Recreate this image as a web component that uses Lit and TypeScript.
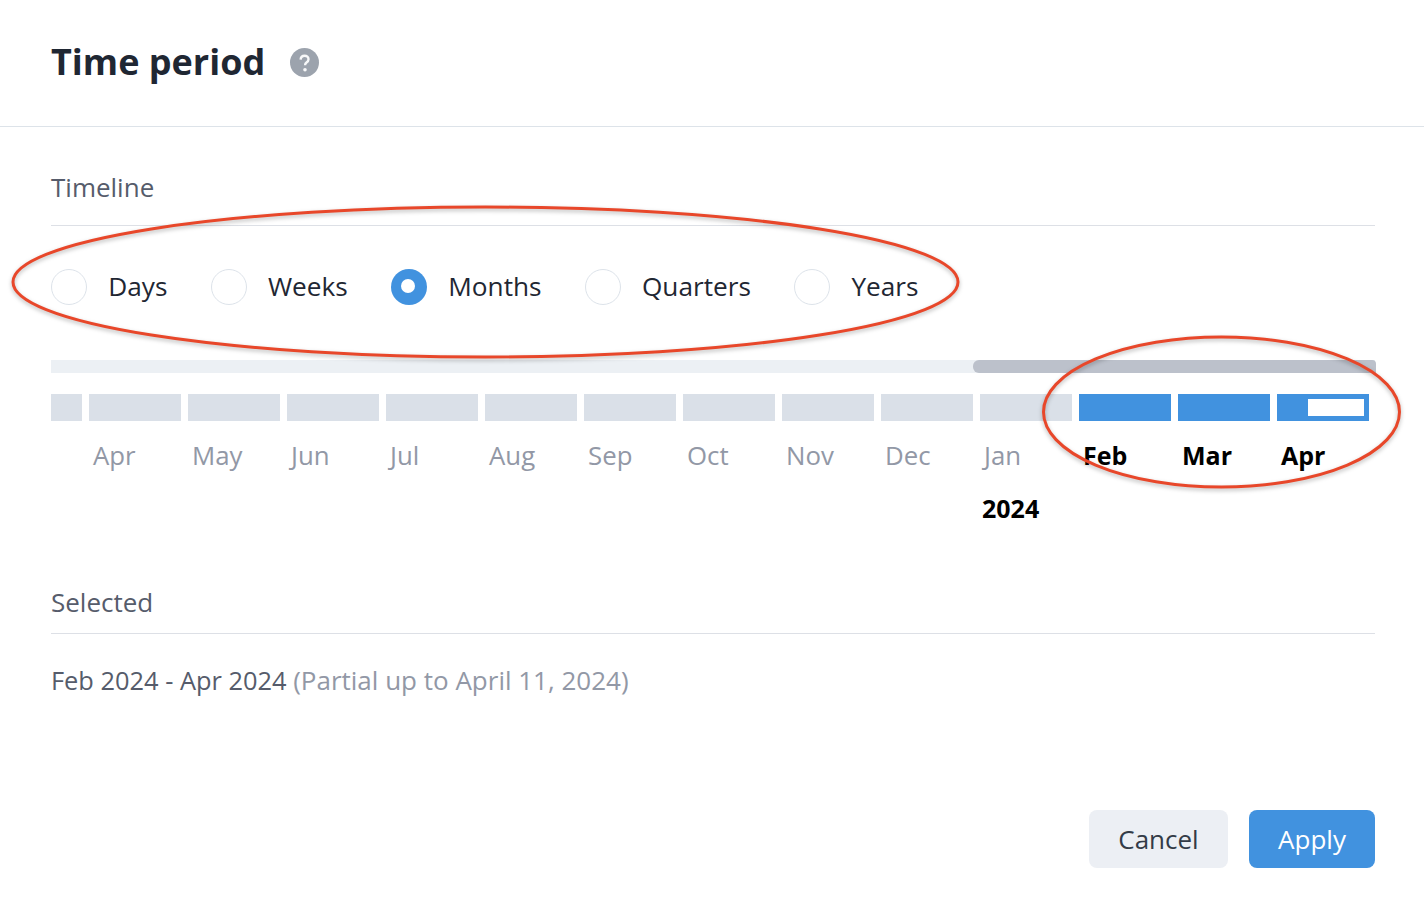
import { LitElement, html, css, svg } from "lit";
import { customElement } from "lit/decorators.js";

const MODES = ["Days", "Weeks", "Months", "Quarters", "Years"];
const MONTHS = ["Apr", "May", "Jun", "Jul", "Aug", "Sep", "Oct", "Nov", "Dec", "Jan", "Feb", "Mar", "Apr"];

@customElement("app-root")
export class AppRoot extends LitElement {
  static styles = css`
    :host {
      display: block;
      position: relative;
      width: 1424px;
      height: 920px;
      background: #fff;
      overflow: hidden;
      font-family: "Open Sans", "Noto Sans", sans-serif;
      color: #1f2733;
    }
    .header {
      height: 127px;
      box-sizing: border-box;
      border-bottom: 1px solid #dde3e9;
      padding: 0 49px 2px 51px;
      display: flex;
      align-items: center;
      gap: 25px;
    }
    h1 {
      margin: 0;
      font-size: 36px;
      line-height: 46px;
      font-weight: 700;
      color: #1f2733;
    }
    .help {
      width: 29px;
      height: 29px;
      display: block;
    }
    .body {
      padding: 0 49px 0 51px;
    }
    .section-title {
      font-size: 26px;
      line-height: 32px;
      color: #565c6b;
      border-bottom: 1px solid #dde0e6;
      box-sizing: border-box;
    }
    .t1 {
      height: 99px;
      padding-top: 44px;
    }
    .modes {
      display: flex;
      gap: 43.2px;
      margin-top: 43px;
      height: 36px;
      align-items: center;
    }
    .mode {
      display: flex;
      align-items: center;
      gap: 21.3px;
      font-size: 26.2px;
      line-height: 34px;
      height: 36px;
    }
    .mode-text {
      display: block;
      margin-top: -2px;
    }
    .radio {
      width: 36px;
      height: 36px;
      box-sizing: border-box;
      border: 1px solid #dde3ea;
      border-radius: 50%;
      background: #fff;
      display: flex;
      align-items: center;
      justify-content: center;
    }
    .radio.on {
      border: 0;
      background: #4192df;
    }
    .radio.on::after {
      content: "";
      width: 14px;
      height: 14px;
      border-radius: 50%;
      background: #fff;
      margin: -2px 0 0 -2px;
    }
    .track {
      margin-top: 55px;
      height: 13px;
      background: #ecf0f4;
      display: flex;
      justify-content: flex-end;
    }
    .thumb {
      width: 403px;
      margin-right: -1px;
      height: 13px;
      background: #bcc1cb;
      border-radius: 6px 4px 0 6px;
    }
    .cells {
      margin-top: 21px;
      display: grid;
      grid-template-columns: 31px repeat(13, 92px);
      column-gap: 7px;
    }
    .cell {
      height: 27px;
      background: #dae0e8;
    }
    .cell.sel {
      background: #4192df;
      position: relative;
    }
    .partial {
      position: absolute;
      left: 31px;
      top: 5px;
      width: 56px;
      height: 17px;
      background: #fff;
    }
    .label {
      font-size: 25.8px;
      line-height: 34px;
      margin-top: 17px;
      padding-left: 4px;
      color: #9298a6;
      white-space: nowrap;
    }
    .label.sel {
      color: #000;
      font-weight: 700;
      font-size: 25px;
    }
    .year {
      font-size: 25px;
      font-weight: 700;
      line-height: 32px;
      color: #000;
      margin-top: 20px;
      padding-left: 2px;
      grid-column: 11;
    }
    .t2 {
      margin-top: 62px;
      height: 48px;
    }
    .selected {
      margin-top: 29px;
      font-size: 25.4px;
      line-height: 34px;
      color: #565c6b;
    }
    .selected span {
      color: #9298a6;
      font-size: 26px;
    }
    .actions {
      margin-top: 113px;
      display: flex;
      justify-content: flex-end;
      gap: 21px;
    }
    button {
      height: 58px;
      border: 0;
      border-radius: 8px;
      font-family: inherit;
      font-size: 26px;
      padding: 0;
    }
    .cancel {
      width: 139px;
      background: #eceff4;
      color: #333b47;
    }
    .apply {
      width: 126px;
      background: #4192df;
      color: #fff;
    }
    .notes {
      position: absolute;
      left: 0;
      top: 0;
      width: 1424px;
      height: 920px;
      pointer-events: none;
      overflow: visible;
    }
    .notes ellipse {
      fill: none;
      stroke: #e8472a;
      stroke-width: 3;
      filter: drop-shadow(0 2px 2px rgba(0, 0, 0, 0.28));
    }
  `;

  render() {
    return html`
      <div class="header">
        <h1>Time period</h1>
        <svg class="help" viewBox="0 0 29 29" aria-hidden="true">
          <circle cx="14.5" cy="14.5" r="14.5" fill="#9ca3ad"></circle>
          <path d="M10.6 11.6c.2-2.5 1.9-3.8 4-3.8 2.2 0 3.9 1.4 3.9 3.4 0 1.7-.9 2.5-2 3.3-1 .7-1.4 1.3-1.4 2.7" fill="none" stroke="#fff" stroke-width="2.4" opacity=".92"></path>
          <circle cx="15" cy="21.8" r="1.8" fill="#fff" opacity=".92"></circle>
        </svg>
      </div>
      <div class="body">
        <div class="section-title t1">Timeline</div>
        <div class="modes">
          ${MODES.map(
            (m) => html`<div class="mode"><div class="radio ${m === "Months" ? "on" : ""}"></div><span class="mode-text">${m}</span></div>`
          )}
        </div>
        <div class="track"><div class="thumb"></div></div>
        <div class="cells">
          <div class="cell"></div>
          ${MONTHS.map(
            (_, i) =>
              html`<div class="cell ${i >= 10 ? "sel" : ""}">${i === 12 ? html`<div class="partial"></div>` : ""}</div>`
          )}
          <div></div>
          ${MONTHS.map((m, i) => html`<div class="label ${i >= 10 ? "sel" : ""}">${m}</div>`)}
          <div class="year">2024</div>
        </div>
        <div class="section-title t2">Selected</div>
        <div class="selected">Feb 2024 - Apr 2024 <span>(Partial up to April 11, 2024)</span></div>
        <div class="actions">
          <button class="cancel">Cancel</button>
          <button class="apply">Apply</button>
        </div>
      </div>
      <svg class="notes" viewBox="0 0 1424 920" aria-hidden="true">
        ${svg`<ellipse cx="485.5" cy="282" rx="472.5" ry="75"></ellipse>
        <ellipse cx="1221.5" cy="412" rx="178" ry="75"></ellipse>`}
      </svg>
    `;
  }
}
